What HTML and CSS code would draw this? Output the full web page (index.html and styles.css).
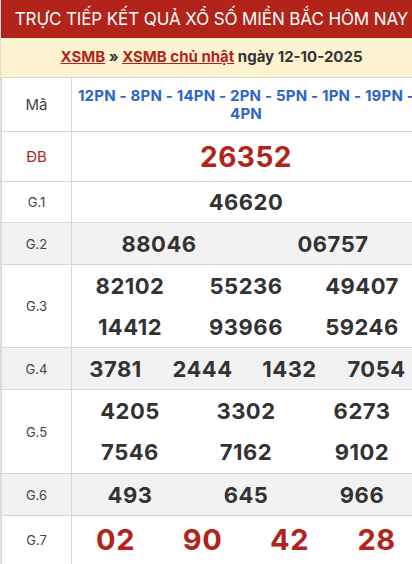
FILE: index.html
```html
<!DOCTYPE html>
<html lang="vi">
<head>
<meta charset="utf-8">
<title>XSMB</title>
<link rel="stylesheet" href="styles.css">
</head>
<body>
<div class="page">
  <div class="box">
    <h2 class="title">TRỰC TIẾP KẾT QUẢ XỔ SỐ MIỀN BẮC HÔM NAY</h2>
    <div class="crumb"><a href="#">XSMB</a> » <a href="#">XSMB chủ nhật</a> ngày 12-10-2025</div>
    <table class="result">
      <tr class="h54">
        <td class="lbl big">Mã</td>
        <td class="code">12PN - 8PN - 14PN - 2PN - 5PN - 1PN - 19PN - 4PN</td>
      </tr>
      <tr class="h50">
        <td class="lbl big red">ĐB</td>
        <td><div class="nums c1"><span class="n db">26352</span></div></td>
      </tr>
      <tr class="h41">
        <td class="lbl">G.1</td>
        <td><div class="nums c1"><span class="n">46620</span></div></td>
      </tr>
      <tr class="alt h42">
        <td class="lbl">G.2</td>
        <td><div class="nums c2"><span class="n">88046</span><span class="n">06757</span></div></td>
      </tr>
      <tr class="h83">
        <td class="lbl">G.3</td>
        <td><div class="nums c3"><span class="n">82102</span><span class="n">55236</span><span class="n">49407</span><span class="n">14412</span><span class="n">93966</span><span class="n">59246</span></div></td>
      </tr>
      <tr class="alt h42">
        <td class="lbl">G.4</td>
        <td><div class="nums c4"><span class="n">3781</span><span class="n">2444</span><span class="n">1432</span><span class="n">7054</span></div></td>
      </tr>
      <tr class="h84">
        <td class="lbl">G.5</td>
        <td><div class="nums c3"><span class="n">4205</span><span class="n">3302</span><span class="n">6273</span><span class="n">7546</span><span class="n">7162</span><span class="n">9102</span></div></td>
      </tr>
      <tr class="alt h41">
        <td class="lbl">G.6</td>
        <td><div class="nums c3"><span class="n">493</span><span class="n">645</span><span class="n">966</span></div></td>
      </tr>
      <tr class="h49">
        <td class="lbl">G.7</td>
        <td><div class="nums c4"><span class="n g7">02</span><span class="n g7">90</span><span class="n g7">42</span><span class="n g7">28</span></div></td>
      </tr>
    </table>
  </div>
</div>
</body>
</html>
```

FILE: styles.css
```css
html, body {
  margin: 0;
  padding: 0;
  overflow: hidden;
  background: #fff;
}
body {
  font-family: Inter, "Noto Sans", sans-serif;
  color: #333;
  width: 412px;
}
.page {
  width: 412px;
  overflow: hidden;
}
.box {
  width: 421px;
  border-left: 1px solid #e2ddd5;
}
.title {
  margin: 0;
  height: 38px;
  background: #b2241a;
  color: #fff;
  font-weight: 400;
  font-size: 17px;
  letter-spacing: -0.1px;
  line-height: 38px;
  text-align: center;
  white-space: nowrap;
}
.crumb {
  height: 39px;
  background: #fdf3d1;
  font-size: 15px;
  font-weight: 700;
  line-height: 38px;
  text-align: center;
  color: #333;
}
.crumb a {
  color: #b2241a;
  text-decoration: underline;
}
.result {
  width: 420px;
  border-collapse: collapse;
  table-layout: fixed;
}
.result td {
  border: 1px solid #dad5cd;
  padding: 0;
  text-align: center;
  vertical-align: middle;
}
.result td.lbl {
  width: 69px;
  font-size: 13px;
  color: #444;
}
.result td.big { font-size: 15px; }
.result td.red { color: #b2241a; }
.h54 { height: 54px; }
.h50 { height: 50px; }
.h41 { height: 41px; }
.h42 { height: 42px; }
.h83 { height: 83px; }
.h84 { height: 84px; }
.h49 { height: 49px; }
.alt td { background: #f2f2f2; }
.code {
  color: #2d64c8;
  font-size: 15px;
  font-weight: 700;
  line-height: 18px;
  letter-spacing: 0.2px;
  padding: 0 4px;
}
.nums {
  display: grid;
  align-items: center;
  justify-items: center;
}
.c1 { grid-template-columns: 1fr; }
.c2 { grid-template-columns: 1fr 1fr; }
.c3 { grid-template-columns: 1fr 1fr 1fr; grid-auto-rows: 41px; }
.c4 { grid-template-columns: 1fr 1fr 1fr 1fr; }
.n {
  font-size: 22px;
  font-weight: 700;
  color: #333;
  letter-spacing: 0.5px;
  line-height: 28px;
}
.n.db {
  font-size: 28px;
  color: #b2241a;
  line-height: 36px;
}
.n.g7 {
  font-size: 29px;
  color: #b2241a;
  line-height: 36px;
}
```
